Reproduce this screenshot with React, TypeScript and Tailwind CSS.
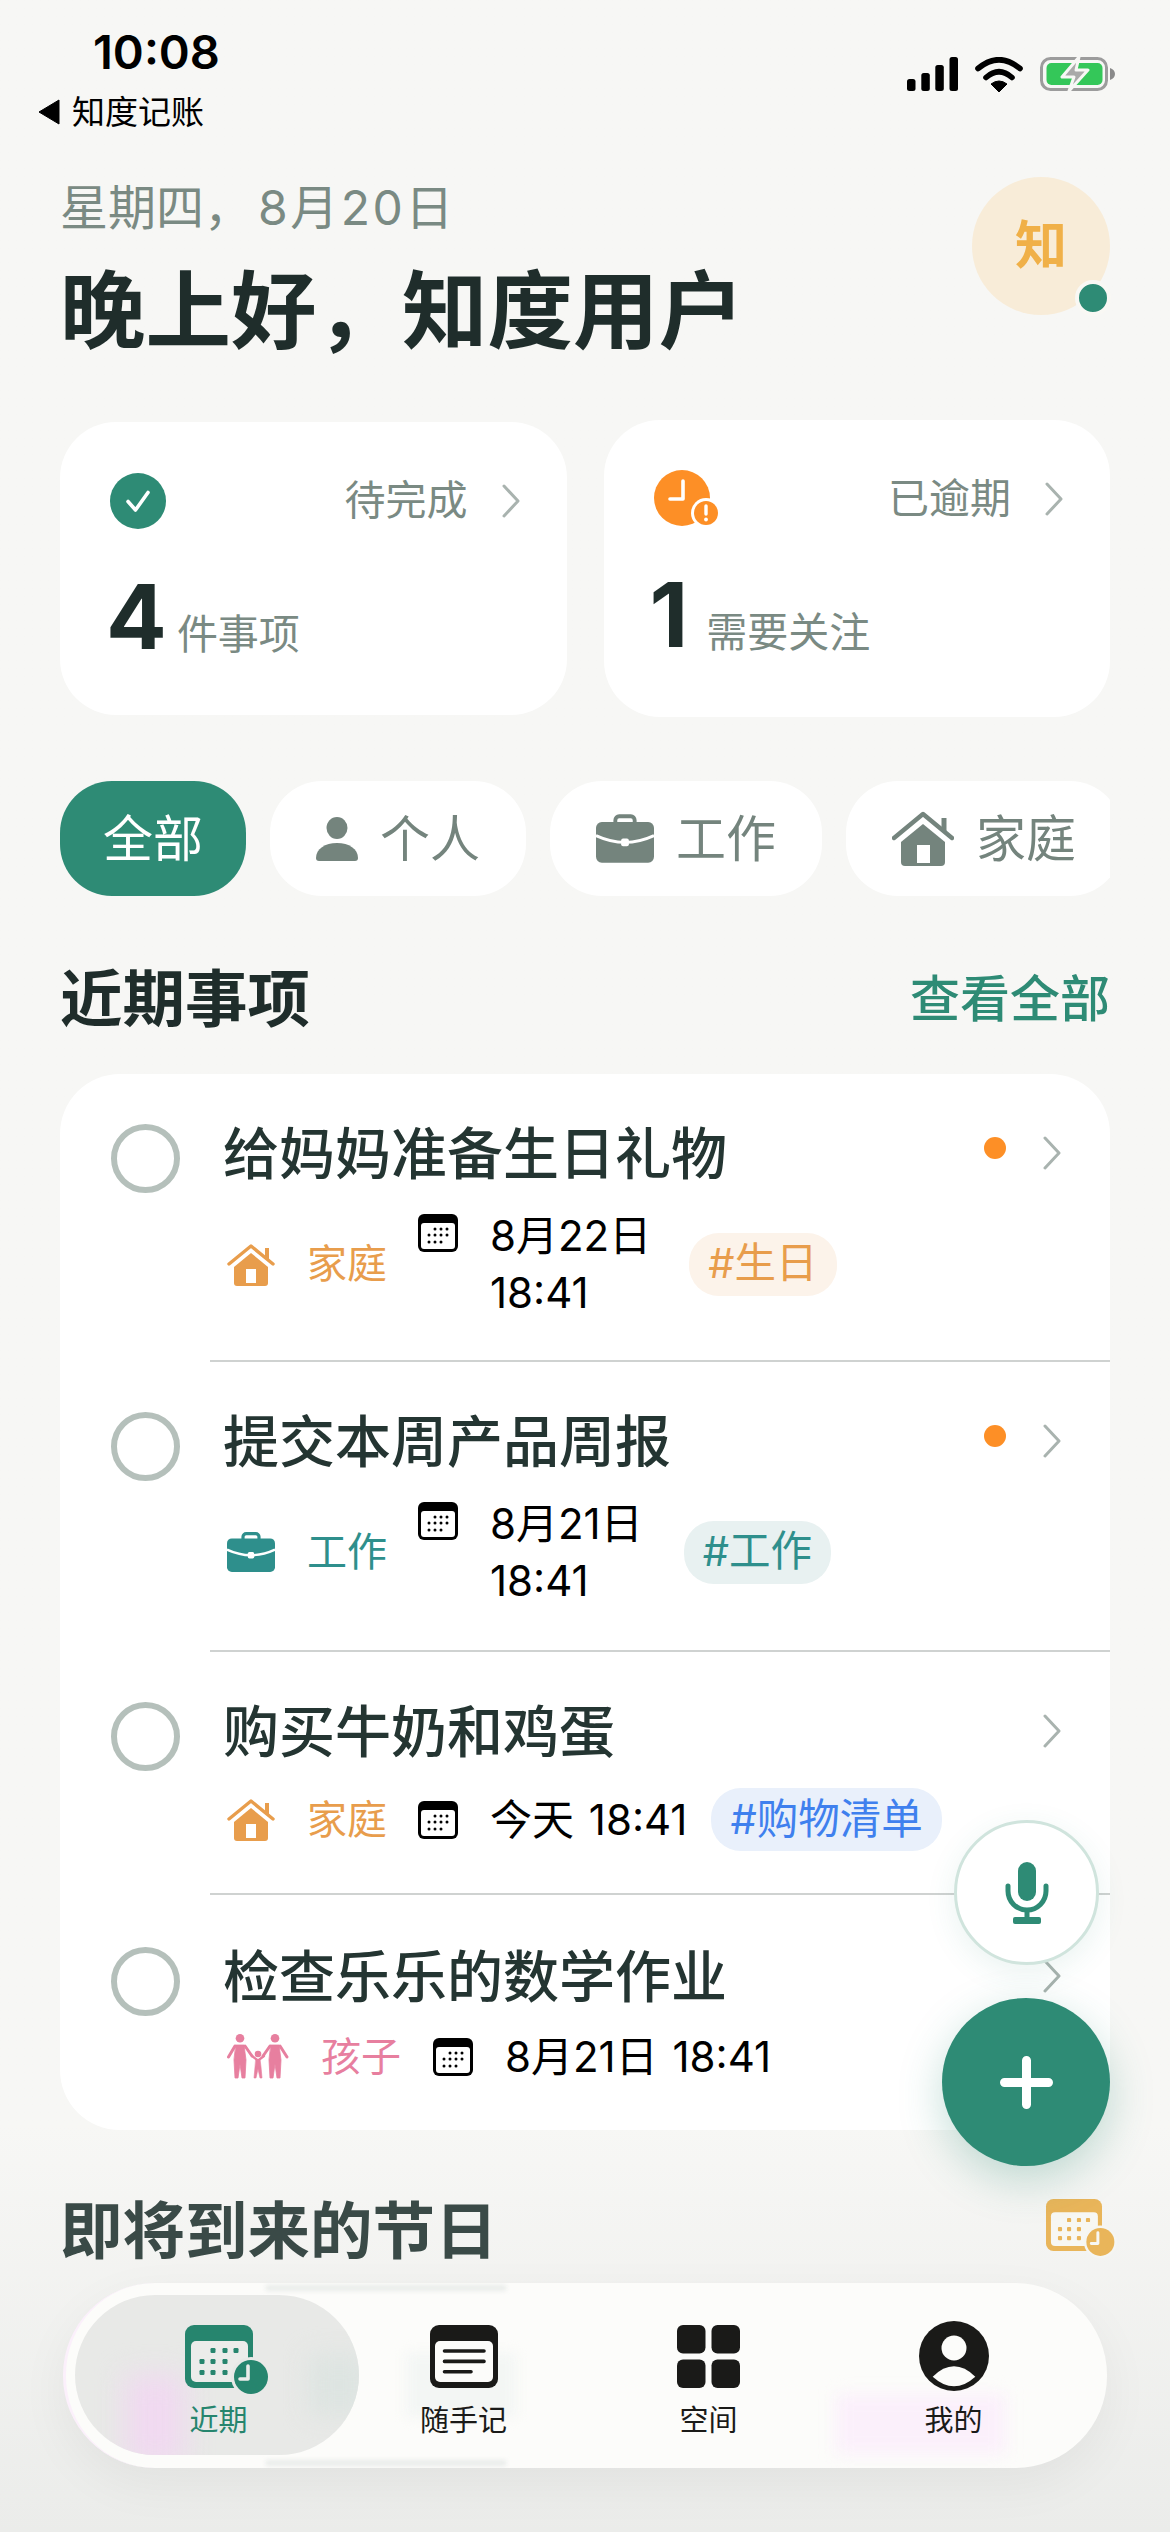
import type { ReactNode } from 'react'

const Chevron = ({ className = '' }: { className?: string }) => (
  <svg viewBox="0 0 20 34" className={`h-[34px] w-[20px] shrink-0 ${className}`} fill="none" stroke="#a9b3af" strokeWidth="3" strokeLinecap="round" strokeLinejoin="round">
    <path d="M3 2l14 15L3 32" />
  </svg>
)

const HomeIcon = ({ className, color }: { className: string; color: string }) => (
  <svg viewBox="0 0 48 43" className={className}>
    <path d="M2 21 24 3l22 18" fill="none" stroke={color} strokeWidth="3.4" strokeLinecap="round" strokeLinejoin="round" />
    <path d="M40 5v11" fill="none" stroke={color} strokeWidth="4" />
    <path d="M7 24 24 10l17 14v16a3 3 0 0 1-3 3H10a3 3 0 0 1-3-3z" fill={color} />
    <rect x="19" y="26" width="10" height="14" fill="#fff" />
  </svg>
)

const BriefcaseIcon = ({ className, color }: { className: string; color: string }) => (
  <svg viewBox="0 0 60 50" className={className}>
    <path d="M20 10V6a4 4 0 0 1 4-4h12a4 4 0 0 1 4 4v4" fill="none" stroke={color} strokeWidth="4" />
    <rect y="8" width="60" height="42" rx="6" fill={color} />
    <path d="M0 22q30 14 60 0" fill="none" stroke="#fff" strokeWidth="3" />
    <rect x="26" y="25" width="8" height="8" rx="2" fill="#fff" />
  </svg>
)

const PersonIcon = ({ color }: { color: string }) => (
  <svg viewBox="0 0 42 44" className="h-[44px] w-[42px]" fill={color}>
    <ellipse cx="21" cy="11" rx="10.5" ry="11" />
    <path d="M0 41c0-9 9-15 21-15s21 6 21 15c0 2-1 3-3 3H3c-2 0-3-1-3-3z" />
  </svg>
)

const FamilyIcon = () => (
  <svg viewBox="0 0 62 45" className="h-[45px] w-[62px]" fill="#e77f9f" stroke="#e77f9f" strokeLinecap="round">
    <circle cx="13" cy="4.3" r="4.3" stroke="none" />
    <circle cx="48" cy="4.3" r="4.3" stroke="none" />
    <circle cx="31" cy="20" r="3.3" stroke="none" />
    <path d="M9 11h8l2 15-1 18h-3l-2-14-2 14H8L7 26z" strokeWidth="0.8" />
    <path d="M44 11h8l2 15-1 18h-3l-2-14-2 14h-3l-1-18z" strokeWidth="0.8" />
    <path d="M8 12 1.5 23M18 12l7 10M43 12l-7 10M53 12l7 11" strokeWidth="3" fill="none" />
    <path d="M29 25h4l1 8 1 11h-2l-2-9-2 9h-2l1-11z" strokeWidth="0.6" />
    <path d="M29 25l-4-3M33 25l4-3" strokeWidth="2.2" fill="none" />
  </svg>
)

const SmallCalendar = ({ className = '' }: { className?: string }) => (
  <svg viewBox="0 0 40 38" className={`h-[38px] w-[40px] shrink-0 ${className}`}>
    <rect width="40" height="38" rx="6" fill="#000" />
    <rect x="3" y="9" width="34" height="26" rx="3" fill="#fff" />
    <g fill="#000">
      {[[17, 15], [23, 15], [29, 15], [11, 21], [17, 21], [23, 21], [29, 21], [11, 28], [17, 28], [23, 28]].map(([x, y]) => (
        <circle key={`${x}-${y}`} cx={x} cy={y} r="1.5" />
      ))}
    </g>
  </svg>
)

const ClockCalendar = ({ className, color, bg, inner }: { className: string; color: string; bg: string; inner: string }) => (
  <svg viewBox="0 0 68 63" className={`overflow-visible ${className}`}>
    <rect width="68" height="63" rx="9" fill={color} />
    <rect x="6" y="16" width="57" height="41" rx="5" fill={inner} />
    <g fill={color}>
      {[[28, 25.5], [40, 25.5], [51, 25.5], [17, 36.5], [28, 36.5], [40, 36.5], [17, 47.5], [28, 47.5], [40, 47.5]].map(([x, y]) => (
        <rect key={`${x}-${y}`} x={x - 2.5} y={y - 2.5} width="5" height="5" rx="1.2" />
      ))}
    </g>
    <circle cx="66" cy="52" r="20" fill={bg} />
    <circle cx="66" cy="52" r="17" fill={color} />
    <path d="M63 41v13h-8" fill="none" stroke={inner} strokeWidth="3.6" strokeLinecap="round" strokeLinejoin="round" />
  </svg>
)

const Tag = ({ className, children }: { className: string; children: ReactNode }) => (
  <span className={`flex h-[63px] shrink-0 items-center rounded-[30px] px-[19px] text-[41.5px] leading-none ${className}`}>{children}</span>
)

type Task = {
  title: string
  urgent?: boolean
  icon: ReactNode
  label: string
  labelColor: string
  calGap: string
  date: string[]
  tag?: string
  tagClass?: string
  tagGap?: string
  padTop: string
  padBottom: string
  metaGap: string
  divider: boolean
}

const homeOrange = <HomeIcon className="ml-[4px] h-[43px] w-[48px] shrink-0" color="#e89d4c" />

const tasks: Task[] = [
  {
    title: '给妈妈准备生日礼物', urgent: true, icon: homeOrange, label: '家庭', labelColor: 'text-[#e89d4c]', calGap: 'ml-[31px]',
    date: ['8月22日', '18:41'], tag: '#生日', tagClass: 'bg-[#fcf3ea] text-[#e89d4c]', tagGap: 'ml-[38px]', padTop: 'pt-[42px]', padBottom: 'pb-[41px]', metaGap: 'mt-[15px]', divider: true,
  },
  {
    title: '提交本周产品周报', urgent: true, icon: <BriefcaseIcon className="ml-[4px] h-[40px] w-[48px] shrink-0" color="#2e8f8c" />, label: '工作', labelColor: 'text-[#2e8f8c]', calGap: 'ml-[31px]',
    date: ['8月21日', '18:41'], tag: '#工作', tagClass: 'bg-[#e8f1f1] text-[#2e8f8c]', tagGap: 'ml-[41px]', padTop: 'pt-[42px]', padBottom: 'pb-[43px]', metaGap: 'mt-[15px]', divider: true,
  },
  {
    title: '购买牛奶和鸡蛋', icon: homeOrange, label: '家庭', labelColor: 'text-[#e89d4c]', calGap: 'ml-[31px]',
    date: ['今天 18:41'], tag: '#购物清单', tagClass: 'bg-[#e9f0fb] text-[#3f80ee]', tagGap: 'ml-[24px]', padTop: 'pt-[42px]', padBottom: 'pb-[44px]', metaGap: 'mt-[18px]', divider: true,
  },
  {
    title: '检查乐乐的数学作业', icon: <span className="ml-[4px] shrink-0"><FamilyIcon /></span>, label: '孩子', labelColor: 'text-[#e77f9f]', calGap: 'ml-[32px]',
    date: ['8月21日 18:41'], padTop: 'pt-[44px]', padBottom: 'pb-[40px]', metaGap: 'mt-[10px]', divider: false,
  },
]

function TaskRow({ task }: { task: Task }) {
  const wrapped = task.date.length > 1
  return (
    <div className={`relative flex pl-[51px] pr-[48px] ${task.padTop} ${task.padBottom}`}>
      <div className="mt-[8px] h-[69px] w-[69px] shrink-0 rounded-full border-[6px] border-[#b5c0bb]" />
      <div className="ml-[43px] min-w-0 flex-1">
        <div className="text-[56px] font-medium leading-[76px] text-[#243532]">{task.title}</div>
        <div className={`${task.metaGap} flex items-center ${wrapped ? 'h-[114px]' : 'h-[63px]'}`}>
          {task.icon}
          <span className={`ml-[32px] text-[40px] leading-none ${task.labelColor}`}>{task.label}</span>
          <div className={`${task.calGap} flex ${wrapped ? 'items-start' : 'items-center'}`}>
            <SmallCalendar className={wrapped ? 'mt-[7px]' : ''} />
            <div className="ml-[32px] whitespace-nowrap text-[42px] leading-[57px] text-[#000] [word-spacing:3px]">
              {task.date.map(d => <div key={d}>{d}</div>)}
            </div>
          </div>
          {task.tag && <Tag className={`${task.tagGap} ${task.tagClass}`}>{task.tag}</Tag>}
        </div>
      </div>
      <div className="flex h-[76px] items-center">
        {task.urgent && <span className="mr-[36px] -mt-[12px] h-[22px] w-[22px] rounded-full bg-[#fd8f26]" />}
        <Chevron className="-mt-[3px]" />
      </div>
      {task.divider && <div className="absolute bottom-0 left-[150px] right-0 h-[2px] bg-[#cfd2d1]" />}
    </div>
  )
}

function StatCard({ icon, label, value, unit, heightClass, unitGap }: { icon: ReactNode; label: string; value: string; unit: string; heightClass: string; unitGap: string }) {
  return (
    <div className={`rounded-[56px] bg-white pl-[50px] pr-[46px] pt-[50px] ${heightClass}`}>
      <div className="flex h-[57px] items-center justify-between">
        {icon}
        <div className="flex items-center gap-[33px]">
          <span className="text-[41px] leading-none text-[#7a8a83]">{label}</span>
          <Chevron />
        </div>
      </div>
      <div className={`mt-[48px] -ml-[4px] flex items-baseline ${unitGap}`}>
        <span className="text-[90px] font-bold leading-[80px] text-[#1f2d2b]">{value}</span>
        <span className="text-[41px] leading-none text-[#7a8a83]">{unit}</span>
      </div>
    </div>
  )
}

function Pill({ icon, label, active = false }: { icon?: ReactNode; label: string; active?: boolean }) {
  return (
    <div className={`flex h-[115px] shrink-0 items-center gap-[22px] rounded-[52px] text-[50px] leading-none ${active ? 'bg-[#2e8b75] px-[43px] text-white' : 'bg-white px-[46px] text-[#74847d]'}`}>
      {icon}
      <span>{label}</span>
    </div>
  )
}

function TabItem({ icon, label, active = false }: { icon: ReactNode; label: string; active?: boolean }) {
  return (
    <div className="flex w-[245px] flex-col items-center pt-[37px]">
      <div className="flex h-[72px] items-center justify-center">{icon}</div>
      <span className={`mt-[11px] text-[29px] leading-[36px] ${active ? 'text-[#26856e]' : 'text-[#1a1a18]'}`}>{label}</span>
    </div>
  )
}

function HomeIconPill() {
  return (
    <svg viewBox="0 0 62 56" className="h-[56px] w-[62px]">
      <path d="M2 27 31 3l29 24" fill="none" stroke="#74847d" strokeWidth="4.4" strokeLinecap="round" strokeLinejoin="round" />
      <path d="M52 7v14" fill="none" stroke="#74847d" strokeWidth="5" />
      <path d="M9 31 31 13l22 18v20a4 4 0 0 1-4 4H13a4 4 0 0 1-4-4z" fill="#74847d" />
      <rect x="25" y="34" width="13" height="18" fill="#fff" />
    </svg>
  )
}

export default function App() {
  return (
    <div className="relative h-[2532px] w-[1170px] overflow-hidden bg-linear-to-b from-[#f7f7f5] from-84% to-[#ebecea] [font-family:Inter,'Noto_Sans_CJK_SC',sans-serif]">
      {/* status bar */}
      <div className="flex items-start justify-between pl-[38px] pr-[55px] pt-[30px]">
        <div>
          <div className="ml-[55px] text-[47px] font-semibold leading-[44px] text-black">10:08</div>
          <div className="mt-[18px] flex h-[40px] items-center gap-[12px]">
            <svg viewBox="0 0 22 26" className="h-[26px] w-[22px]"><path d="M21 1v24L1 13z" fill="#000" stroke="#000" strokeLinejoin="round" /></svg>
            <span className="text-[33px] leading-none text-black">知度记账</span>
          </div>
        </div>
        <div className="mt-[26px] flex items-center gap-[17px]">
          <svg viewBox="0 0 51 34" className="h-[34px] w-[51px]" fill="#000">
            <rect y="22" width="8.5" height="12" rx="2.5" />
            <rect x="14.3" y="16" width="8.5" height="18" rx="2.5" />
            <rect x="28.3" y="8" width="8.5" height="26" rx="2.5" />
            <rect x="42.5" width="8.5" height="34" rx="2.5" />
          </svg>
          <svg viewBox="0 0 48 35" className="h-[35px] w-[48px]">
            <path d="M3 11.5Q24-6 45 11.5M11 20.5Q24 9 37 20.5" fill="none" stroke="#000" strokeWidth="5.6" strokeLinecap="round" />
            <path d="M16 27q8-6 16 0l-8 8z" fill="#000" stroke="#000" strokeLinejoin="round" />
          </svg>
          <svg viewBox="0 0 75 36" className="h-[36px] w-[75px]">
            <rect x="1.5" y="2.5" width="65" height="31" rx="9" fill="none" stroke="#9c9c9c" strokeWidth="3" />
            <rect x="6.5" y="7" width="56" height="22" rx="5" fill="#34c759" />
            <path d="M39 1 22 21h12l-5 14 19-21H36z" fill="#a9a9a9" stroke="#f7f7f5" strokeWidth="3" strokeLinejoin="round" />
            <path d="M70 12c3 1 5 3 5 6s-2 5-5 6z" fill="#8a8a8a" />
          </svg>
        </div>
      </div>

      {/* greeting */}
      <div className="mt-[46px] flex items-start justify-between px-[60px]">
        <div>
          <div className="text-[48px] leading-[60px] text-[#7a8a83]">星期四，<span className="ml-[6px] tracking-[2.5px]">8月20日</span></div>
          <div className="mt-[25px] text-[85.5px] font-bold leading-[96px] text-[#1f2d2b]">晚上好，知度用户</div>
        </div>
        <div className="relative -mt-[1px] flex h-[138px] w-[138px] items-center justify-center rounded-full bg-[#f8ecd8] text-[52px] font-bold leading-none text-[#f0b048]">
          知
          <span className="absolute bottom-[-1px] right-[-1px] h-[36px] w-[36px] rounded-full border-[4px] border-[#f9f8f4] bg-[#2e8b75]" />
        </div>
      </div>

      {/* stat cards */}
      <div className="mt-[61px] grid grid-cols-2 items-center gap-[37px] px-[60px]">
        <StatCard
          heightClass="h-[293px]"
          unitGap="gap-[10px]"
          label="待完成"
          value="4"
          unit="件事项"
          icon={
            <svg viewBox="0 0 56 56" className="h-[56px] w-[56px]">
              <circle cx="28" cy="28" r="28" fill="#2e8b75" />
              <path d="M18 28.5l7.5 8.5L38 19.5" fill="none" stroke="#fff" strokeWidth="3.6" strokeLinecap="round" strokeLinejoin="round" />
            </svg>
          }
        />
        <StatCard
          heightClass="h-[297px]"
          unitGap="gap-[18px]"
          label="已逾期"
          value="1"
          unit="需要关注"
          icon={
            <svg viewBox="0 0 67 58" className="h-[58px] w-[67px]">
              <circle cx="28" cy="28" r="28" fill="#fd8f26" />
              <path d="M29 11v18H16" fill="none" stroke="#fff" strokeWidth="3.6" strokeLinecap="round" strokeLinejoin="round" />
              <circle cx="52" cy="43" r="15" fill="#fff" />
              <circle cx="52" cy="43" r="12" fill="#fd8f26" />
              <path d="M52 36v8" stroke="#fff" strokeWidth="3.4" strokeLinecap="round" />
              <circle cx="52" cy="49.5" r="1.9" fill="#fff" />
            </svg>
          }
        />
      </div>

      {/* filter pills */}
      <div className="mx-[60px] mt-[64px] flex gap-[24px] overflow-hidden">
        <Pill label="全部" active />
        <Pill label="个人" icon={<PersonIcon color="#74847d" />} />
        <Pill label="工作" icon={<BriefcaseIcon className="h-[49px] w-[58px]" color="#74847d" />} />
        <Pill label="家庭" icon={<HomeIconPill />} />
      </div>

      {/* recent */}
      <div className="mt-[63px] flex items-center justify-between px-[60px]">
        <span className="text-[62.5px] font-bold leading-[80px] text-[#1f2d2b]">近期事项</span>
        <span className="text-[50px] font-medium leading-[80px] text-[#2e8b75]">查看全部</span>
      </div>
      <div className="mx-[60px] mt-[35px] h-[1056px] overflow-hidden rounded-[60px] bg-white">
        {tasks.map(t => <TaskRow key={t.title} task={t} />)}
      </div>

      {/* holidays */}
      <div className="mt-[61px] flex items-center justify-between pl-[60px] pr-[68px]">
        <span className="text-[62.5px] font-bold leading-[80px] text-[#3a4a47]">即将到来的节日</span>
        <ClockCalendar className="-mt-[12px] h-[52px] w-[56px]" color="#e9b55a" bg="#f5f6f3" inner="#f7f7f3" />
      </div>

      {/* floating buttons */}
      <div className="absolute left-[954px] top-[1820px] flex h-[145px] w-[145px] items-center justify-center rounded-full border-[3px] border-[#d0e4dd] bg-white shadow-[0_8px_30px_rgba(46,139,117,0.1)]">
        <svg viewBox="0 0 44 62" className="h-[62px] w-[44px]" fill="#2e8b75">
          <rect x="13" width="18" height="39" rx="9" />
          <path d="M3 24v5a19 19 0 0 0 38 0v-5" fill="none" stroke="#2e8b75" strokeWidth="5" strokeLinecap="round" />
          <rect x="19.5" y="46" width="5" height="11" />
          <rect x="8" y="55" width="28" height="7" rx="2" />
        </svg>
      </div>
      <div className="absolute left-[942px] top-[1998px] flex h-[168px] w-[168px] items-center justify-center rounded-full bg-[#2e8b75] shadow-[0_14px_44px_rgba(46,139,117,0.28)]">
        <svg viewBox="0 0 53 53" className="h-[53px] w-[53px]" fill="none" stroke="#fff" strokeWidth="9" strokeLinecap="round">
          <path d="M26.5 4.5v44M4.5 26.5h44" />
        </svg>
      </div>

      <div className="absolute left-[63px] top-[2283px] h-[185px] w-[1044px] overflow-hidden rounded-[92px] border-l-[3px] border-[#fbf0fb] bg-[#fcfcfa] shadow-[0_16px_50px_rgba(0,0,0,0.05)]">
        <div className="absolute left-[200px] top-[2px] h-[6px] w-[240px] bg-[#e9ecea] blur-[2px]" />
        <div className="absolute bottom-[2px] left-[200px] h-[6px] w-[240px] bg-[#e9ecea] blur-[2px]" />
        <div className="absolute left-[340px] top-[70px] h-[64px] w-[110px] bg-[#f3f6f4] blur-[6px]" />
        <div className="absolute bottom-[14px] left-[770px] h-[60px] w-[170px] bg-[#fbf0fb] blur-[8px]" />
        <div className="absolute left-[9px] top-[12px] h-[160px] w-[284px] overflow-hidden rounded-[80px] bg-[#e8e9e7]">
          <div className="absolute bottom-[-10px] left-[50px] h-[90px] w-[60px] bg-[#f0d9f0] blur-[14px]" />
          <div className="absolute right-[-10px] top-[60px] h-[60px] w-[60px] bg-[#dde4e1] blur-[12px]" />
        </div>
        <div className="relative flex px-[30px]">
          <TabItem active label="近期" icon={<ClockCalendar className="h-[63px] w-[68px]" color="#26856e" bg="#e8e9e7" inner="#ebecea" />} />
          <TabItem
            label="随手记"
            icon={
              <svg viewBox="0 0 68 63" className="h-[63px] w-[68px]">
                <rect width="68" height="63" rx="9" fill="#1a1a18" />
                <rect x="5" y="16" width="58" height="41" rx="5" fill="#fcfcfa" />
                <path d="M14.5 26h39.5M14.5 36.4h39.5M14.5 46.8h26.5" stroke="#1a1a18" strokeWidth="3.6" strokeLinecap="round" />
              </svg>
            }
          />
          <TabItem
            label="空间"
            icon={
              <svg viewBox="0 0 63 63" className="h-[63px] w-[63px]" fill="#1a1a18">
                <rect width="28.5" height="28.5" rx="6" />
                <rect x="34.5" width="28.5" height="28.5" rx="6" />
                <rect y="34.5" width="28.5" height="28.5" rx="6" />
                <rect x="34.5" y="34.5" width="28.5" height="28.5" rx="6" />
              </svg>
            }
          />
          <TabItem
            label="我的"
            icon={
              <svg viewBox="0 0 70 70" className="h-[70px] w-[70px]">
                <circle cx="35" cy="35" r="35" fill="#1a1a18" />
                <circle cx="35" cy="27" r="12.5" fill="#fcfcfa" />
                <path d="M13.7 55.7Q35 35 56.3 55.7 35 75 13.7 55.7z" fill="#fcfcfa" />
              </svg>
            }
          />
        </div>
      </div>
    </div>
  )
}
